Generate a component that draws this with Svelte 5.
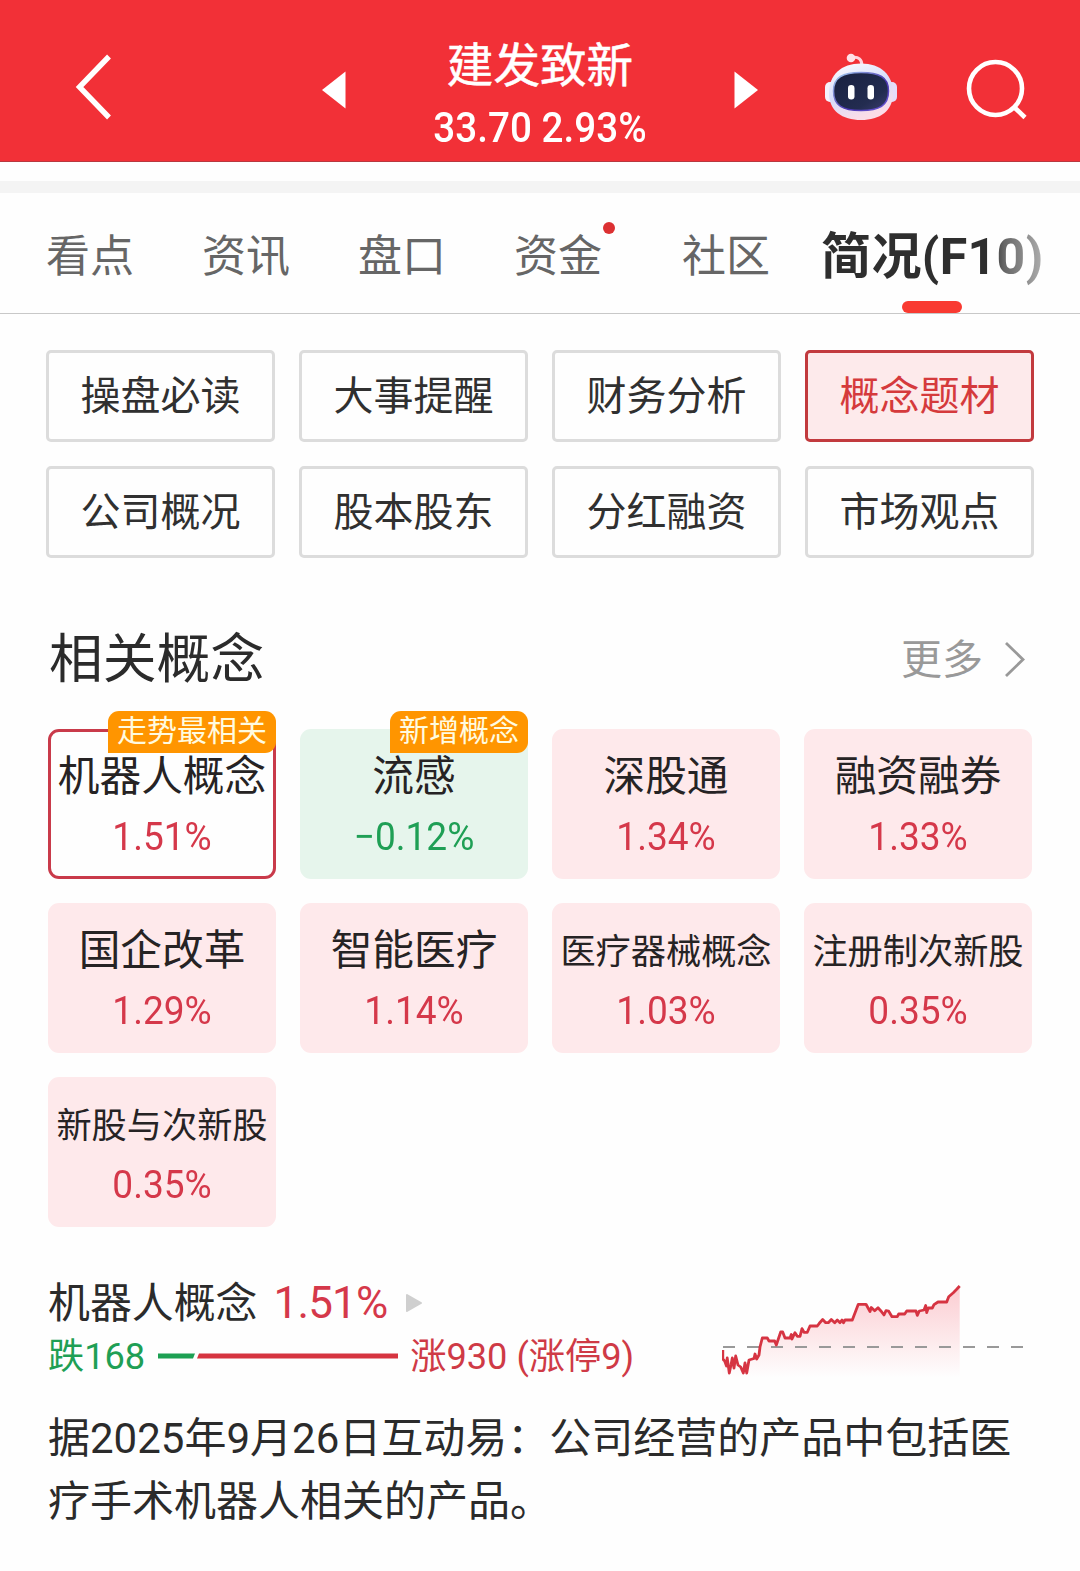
<script>
  const tabs = [
    { label: '看点' },
    { label: '资讯' },
    { label: '盘口' },
    { label: '资金', dot: true },
    { label: '社区' },
    { label: '简况(F10)', active: true },
  ];

  const sections = ['操盘必读', '大事提醒', '财务分析', '概念题材', '公司概况', '股本股东', '分红融资', '市场观点'];
  const activeSection = '概念题材';

  const concepts = [
    { name: '机器人概念', change: '1.51%', badge: '走势最相关', selected: true },
    { name: '流感', change: '−0.12%', badge: '新增概念', down: true },
    { name: '深股通', change: '1.34%' },
    { name: '融资融券', change: '1.33%' },
    { name: '国企改革', change: '1.29%' },
    { name: '智能医疗', change: '1.14%' },
    { name: '医疗器械概念', change: '1.03%' },
    { name: '注册制次新股', change: '0.35%' },
    { name: '新股与次新股', change: '0.35%' },
  ];

  const trend =
    '.8,30 .8,39 2.700,41 4.500,46 5.200,38 7.300,53 9,45 10.300,38 12,48 13.700,36 16,45 18.700,47 21.300,53 23,43 24.700,53 27,40 32,38.500 33,34 34.700,39 37,35 38,27 40.300,18 45.300,18 47,21 52.700,21 54.300,25 56,20 58.700,12 60.700,12 63,18 68,18 69.300,14.500 70,19 73,12.700 75.300,16.300 78,16.300 80,8.700 82,12.300 85.300,12.300 88,6 95.300,6 97.300,3.300 100.700,-.5 103.700,2.700 106.300,2.700 109.300,-.5 112.700,2.700 115.300,0 118,2.700 120,0 121.500,2.700 123,0 130.300,0 136.300,-15.700 144,-15.700 148,-8.500 149.300,-12.500 152.700,-9.300 156,-12.300 158.700,-9.300 162,-5 164,-9.300 166.700,-8.800 170,-3.300 175.300,-3.300 176.700,-6 182.700,-6 184.700,-9 194,-9 195.300,-4.700 197.300,-9 202,-10 203.700,-14.500 204.700,-7.500 206.300,-12 210.300,-12 212,-15.300 216,-18 224.700,-18 226.700,-23.300 231.300,-27.300 234.700,-30.700 237.700,-34';
</script>

<div class="page">
  <header>
    <svg class="back" width="40" height="68" viewBox="0 0 40 68"><path d="M36 3.500 6.500 34 36 64.500" /></svg>
    <svg class="prev" width="24" height="38" viewBox="0 0 24 38"><path d="M0 19 23.500 .5V37.500Z" /></svg>
    <div class="quote">
      <div class="stock">建发致新</div>
      <div class="price">33.70 2.93%</div>
    </div>
    <svg class="next" width="24" height="38" viewBox="0 0 24 38"><path d="M24 19 .5 .5V37.500Z" /></svg>
    <svg class="robot" width="74" height="70" viewBox="0 0 74 70">
      <defs>
        <linearGradient id="shell" x1="0" y1="0" x2=".4" y2="1">
          <stop offset="0" stop-color="#fff" />
          <stop offset=".55" stop-color="#d6dcfb" />
          <stop offset="1" stop-color="#fbdde8" />
        </linearGradient>
        <linearGradient id="visor" x1="0" y1="0" x2="1" y2="1">
          <stop offset="0" stop-color="#18203f" />
          <stop offset=".7" stop-color="#232c50" />
          <stop offset="1" stop-color="#3b3d70" />
        </linearGradient>
        <linearGradient id="rim" x1="0" y1="0" x2="1" y2="1">
          <stop offset="0" stop-color="#a9d5f5" />
          <stop offset=".6" stop-color="#4a34b0" />
          <stop offset="1" stop-color="#6f5cd8" />
        </linearGradient>
      </defs>
      <path class="antenna" d="M28 5.500Q38 4 38 14" />
      <circle cx="27" cy="6" r="4.300" fill="#ffe1e8" />
      <rect x="1" y="30" width="12" height="20" rx="5" fill="#f5f1fc" />
      <rect x="61" y="30" width="12" height="20" rx="5" fill="#e5dcf9" />
      <path d="M37 11.500C57 11.500 69 23 69 41C69 59 56 68 37 68C18 68 5 59 5 41C5 23 17 11.500 37 11.500Z" fill="url(#shell)" />
      <path d="M37 20.500C55 20.500 64.500 25 64.500 39C64.500 54 55 58.500 37 58.500C19 58.500 9.500 54 9.500 39C9.500 25 19 20.500 37 20.500Z" fill="url(#visor)" stroke="url(#rim)" stroke-width="1.500" />
      <rect x="24" y="33" width="6.500" height="14.500" rx="3.200" fill="#fff" />
      <rect x="43.500" y="33" width="6.500" height="14.500" rx="3.200" fill="#fff" />
    </svg>
    <svg class="search" width="62" height="62" viewBox="0 0 62 62"><circle cx="29.500" cy="29.500" r="26.500" /><path d="M48.500 48.500 59 58.500" /></svg>
  </header>
  <div class="band"></div>

  <nav>
    {#each tabs as tab}
      <div class="tab" class:active={tab.active}>
        {tab.label}
        {#if tab.dot}<i class="dot"></i>{/if}
      </div>
    {/each}
  </nav>

  <div class="sections">
    {#each sections as s}
      <div class="section" class:on={s === activeSection}>{s}</div>
    {/each}
  </div>

  <div class="heading">
    <h2>相关概念</h2>
    <span class="more">更多</span>
    <svg width="22" height="38" viewBox="0 0 22 38"><path d="M2 3 19 19.500 2 36" /></svg>
  </div>

  <div class="concepts">
    {#each concepts as c}
      <div class="card" class:selected={c.selected} class:down={c.down}>
        {#if c.badge}<span class="badge">{c.badge}</span>{/if}
        <div class="name" class:long={c.name.length > 5}>{c.name}</div>
        <div class="change">{c.change}</div>
      </div>
    {/each}
  </div>

  <div class="summary">
    <div class="stats">
      <div class="line1">
        <span class="title">机器人概念</span>
        <span class="pct">1.51%</span>
        <svg width="18" height="20" viewBox="0 0 18 20"><path d="M2 2 16 10 2 18Z" /></svg>
      </div>
      <div class="line2">
        <span class="fall">跌168</span>
        <svg width="240" height="6" viewBox="0 0 240 6">
          <path d="M0 .5H37L35 5.500H0Z" fill="#1da053" />
          <path d="M41 .5H240V5.500H39Z" fill="#d63440" />
        </svg>
        <span class="rise">涨930 (涨停9)</span>
      </div>
    </div>
    <svg class="chart" width="302" height="100" viewBox="0 -36 302 100">
      <defs>
        <linearGradient id="area" gradientUnits="userSpaceOnUse" x1="0" y1="-33" x2="0" y2="58">
          <stop offset="0" stop-color="#f5485a" stop-opacity=".27" />
          <stop offset="1" stop-color="#f5485a" stop-opacity="0" />
        </linearGradient>
      </defs>
      <polygon points="0,58 {trend} 237.7,58" fill="url(#area)" />
      <path class="base" d="M1 27H302" />
      <polyline class="trend" points={trend} />
    </svg>
  </div>

  <p>据2025年9月26日互动易：公司经营的产品中包括医疗手术机器人相关的产品。</p>
</div>

<style>
  :global(body) {
    background: #fefefe;
  }
  .page {
    width: 1080px;
    height: 1571px;
    overflow: hidden;
    box-sizing: border-box;
    font-family: Roboto, 'Noto Sans CJK SC', sans-serif;
    color: #2b2b2b;
    background: #fefefe;
  }
  svg {
    display: block;
    flex: none;
  }
  header {
    height: 162px;
    box-sizing: border-box;
    background: #f23037;
    border-bottom: 1px solid #b8383f;
    display: flex;
    align-items: flex-start;
    color: #fff;
  }
  .back {
    margin: 53px 0 0 73px;
    fill: none;
    stroke: #fff;
    stroke-width: 5.4;
  }
  .prev {
    margin: 71px 0 0 209px;
    fill: #fff;
  }
  .quote {
    width: 388px;
    text-align: center;
    padding-top: 38px;
  }
  .stock {
    font-size: 46.6px;
    line-height: 56px;
    font-weight: 400;
    -webkit-text-stroke: 0.5px #fff;
  }
  .price {
    font-size: 42px;
    line-height: 50px;
    margin-top: 9px;
    font-weight: 500;
    transform: scaleX(0.92);
  }
  .next {
    margin-top: 71px;
    fill: #fff;
  }
  .robot {
    margin: 52px 0 0 66px;
  }
  .antenna {
    fill: none;
    stroke: #ffd3de;
    stroke-width: 3;
  }
  .search {
    margin: 59px 0 0 68px;
    fill: none;
    stroke: #fff;
    stroke-width: 4.6;
  }
  .band {
    height: 12px;
    margin-top: 19px;
    background: #f4f4f4;
  }
  nav {
    display: flex;
    height: 121px;
    box-sizing: border-box;
    border-bottom: 1px solid #c8c8c8;
    padding-left: 46px;
    gap: 68px;
  }
  .tab {
    position: relative;
    height: 120px;
    font-size: 44px;
    line-height: 128px;
    color: #666;
    white-space: nowrap;
  }
  .tab:nth-child(5) {
    margin-left: 12px;
  }
  .tab.active {
    font-size: 50px;
    font-weight: 700;
    letter-spacing: 0.4px;
    margin-left: -17px;
    color: transparent;
    background: linear-gradient(90deg, #2e2e2e 76%, #666 82%, #b0b0b0 100%);
    -webkit-background-clip: text;
    background-clip: text;
  }
  .tab.active::after {
    content: '';
    position: absolute;
    left: 81px;
    bottom: 0;
    width: 60px;
    height: 12px;
    border-radius: 6px;
    background: #f93a31;
  }
  .dot {
    position: absolute;
    right: -13px;
    top: 29px;
    width: 12px;
    height: 12px;
    border-radius: 50%;
    background: #dc3032;
  }
  .sections {
    display: grid;
    grid-template-columns: repeat(4, 229px);
    gap: 24px;
    padding: 36px 46px 0;
  }
  .section {
    height: 92px;
    box-sizing: border-box;
    border: 3px solid #dcdcdc;
    border-radius: 5px;
    font-size: 40px;
    line-height: 88px;
    text-align: center;
    color: #303030;
  }
  .section.on {
    border-color: #c23a3e;
    background: #fdeaeb;
    color: #d53a3c;
  }
  .heading {
    display: flex;
    align-items: center;
    height: 80px;
    margin-top: 58px;
    padding: 0 54px 0 49px;
  }
  h2 {
    flex: 1;
    margin: 8px 0 0;
    font-size: 53.8px;
    font-weight: 400;
    line-height: 80px;
  }
  .more {
    font-size: 41px;
    color: #999;
    margin-right: 21px;
  }
  .heading svg {
    margin-top: 6px;
    fill: none;
    stroke: #999;
    stroke-width: 2.8;
  }
  .concepts {
    display: grid;
    grid-template-columns: repeat(4, 228px);
    gap: 24px;
    padding: 33px 48px 0;
  }
  .card {
    position: relative;
    height: 150px;
    box-sizing: border-box;
    padding-top: 18px;
    border-radius: 11px;
    background: #fee9eb;
    text-align: center;
    white-space: nowrap;
  }
  .card.selected {
    background: #fefefe;
    border: 3px solid #c93a4a;
    padding: 15px 0 0;
  }
  .card.down {
    background: #e6f5ec;
  }
  .badge {
    position: absolute;
    right: 0;
    top: -18px;
    height: 42px;
    padding: 0 9px;
    box-sizing: border-box;
    font-size: 30px;
    line-height: 40px;
    color: #fffbe0;
    background: #ff9500;
    border-radius: 11px 11px 11px 0;
  }
  .selected .badge {
    right: -3px;
    top: -21px;
  }
  .name {
    font-size: 41.7px;
    line-height: 60px;
    color: #262324;
  }
  .name.long {
    font-size: 35.2px;
    line-height: 62px;
    height: 60px;
  }
  .change {
    font-size: 39px;
    line-height: 50px;
    margin-top: 5px;
    transform: scaleX(0.95);
    color: #d5384a;
  }
  .down .change {
    color: #1f9f55;
  }
  .summary {
    display: flex;
    justify-content: space-between;
    padding: 43px 56px 0 48px;
  }
  .line1 {
    display: flex;
    align-items: center;
    height: 62px;
  }
  .title {
    font-size: 41.9px;
    line-height: 62px;
    margin-top: 6px;
  }
  .pct {
    font-size: 44px;
    letter-spacing: -0.8px;
    margin: 4px 0 0 16px;
    color: #d5384a;
  }
  .line1 svg {
    margin: 4px 0 0 18px;
    fill: #cfcfcf;
    stroke: #cfcfcf;
    stroke-width: 2;
    stroke-linejoin: round;
  }
  .line2 {
    display: flex;
    align-items: center;
    height: 44px;
    margin-top: 2px;
    font-size: 36.2px;
    line-height: 46px;
  }
  .line2 svg {
    margin: 0 12px 0 13px;
  }
  .line2 span {
    margin-top: 2px;
  }
  .fall {
    color: #1f9f55;
  }
  .rise {
    color: #cf3a46;
  }
  .chart {
    margin-top: 14px;
    height: 100px;
  }
  .base {
    fill: none;
    stroke: #999;
    stroke-width: 2;
    stroke-dasharray: 12 12;
  }
  .trend {
    fill: none;
    stroke: #d63442;
    stroke-width: 2.8;
    stroke-linejoin: round;
  }
  p {
    margin: 23px 48px 0;
    font-size: 42px;
    line-height: 63px;
    line-break: anywhere;
  }
</style>
